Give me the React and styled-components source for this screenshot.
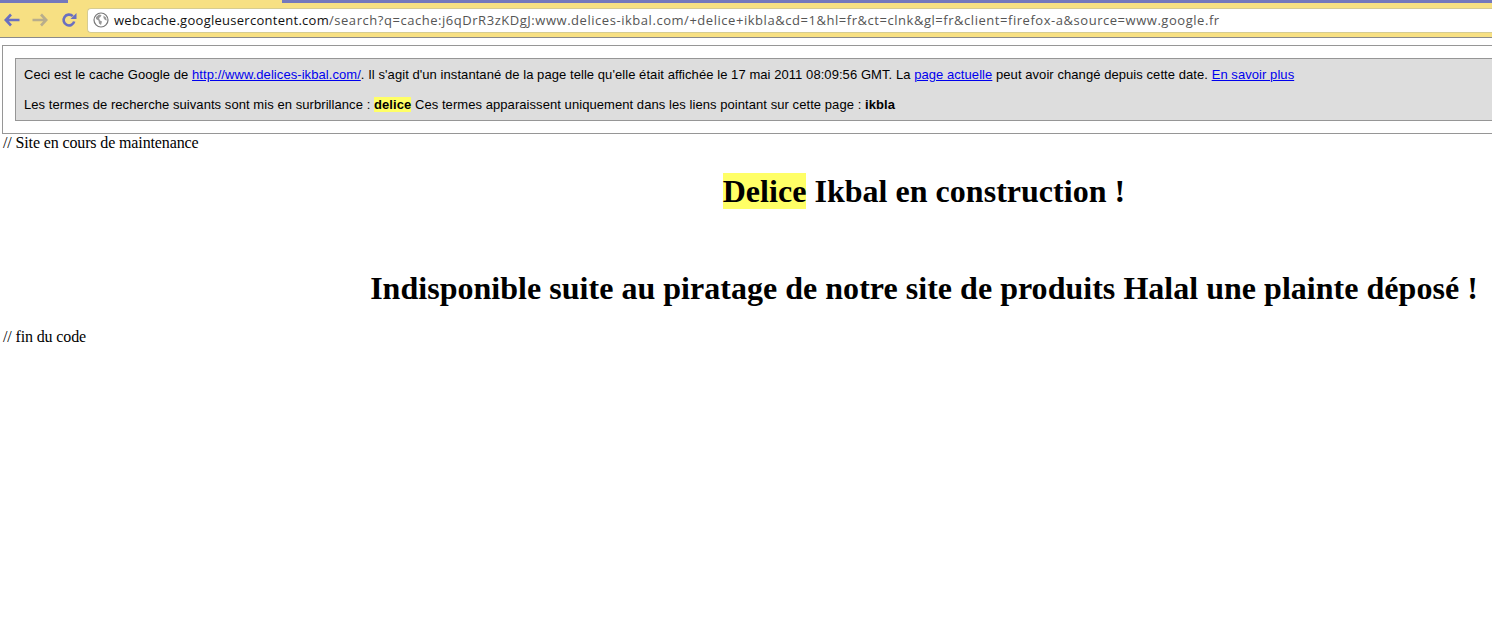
import styled, { createGlobalStyle } from "styled-components"

const Global = createGlobalStyle`
  html, body {
    margin: 0;
    padding: 0;
    background: #fff;
    overflow: hidden;
  }
`

const Page = styled.div`
  width: 1492px;
  height: 622px;
  overflow: hidden;
  font-family: "Liberation Serif", "Times New Roman", serif;
  font-size: 16px;
  color: #000;
`

const TabStrip = styled.div`
  height: 3px;
  display: flex;
  background: #f7e083;
`

const TabEdge = styled.div`
  width: ${(p) => p.$w}px;
  flex: ${(p) => (p.$w ? "none" : 1)};
  background: ${(p) => (p.$gap ? "#f7e083" : "#7478bd")};
`

const Toolbar = styled.div`
  height: 34px;
  display: flex;
  align-items: center;
  background: #f7e083;
  border-bottom: 1px solid #8a8a8a;
`

const NavIcon = styled.svg`
  width: 16px;
  height: 16px;
  margin-left: ${(p) => p.$ml}px;
  margin-bottom: 1px;
  flex: none;
`

const Omnibox = styled.div`
  height: 22px;
  padding-bottom: 1px;
  margin-left: 10px;
  flex: 1;
  display: flex;
  align-items: center;
  background: #fff;
  border: 1px solid #d6cc92;
  border-right: none;
  border-radius: 4px 0 0 4px;
  font-family: "Open Sans", "DejaVu Sans", sans-serif;
  font-size: 13px;
  letter-spacing: 0.54px;
  color: #555;
  white-space: nowrap;
`

const Globe = styled.svg`
  width: 16px;
  height: 16px;
  margin: 0 5px 0 5px;
  flex: none;
`

const Host = styled.span`
  color: #111;
  letter-spacing: 0.27px;
`

const CacheBar = styled.div`
  margin: 7px -20px 0 2px;
  padding: 12px;
  background: #fff;
  border: 1px solid #969696;
  font-family: "Liberation Sans", Arial, sans-serif;
  font-size: 13px;
  letter-spacing: 0.065px;
`

const CacheInner = styled.div`
  background: #ddd;
  border: 1px solid #969696;
  padding: 0 8px;
  height: 61px;
  color: #000;
`

const CacheLine = styled.div`
  height: 15px;
  line-height: 15px;
  margin-top: ${(p) => p.$mt}px;
  white-space: nowrap;
`

const CacheLink = styled.a`
  color: #0000ee;
  text-decoration: underline;
`

const Mark = styled.b`
  background: #ffff66;
  font-weight: bold;
`

const Note = styled.div`
  height: 18px;
  line-height: 18px;
  margin-top: ${(p) => p.$mt || 0}px;
  padding-left: 3px;
  letter-spacing: -0.13px;
`

const Heading = styled.h1`
  margin: ${(p) => p.$mt}px 0 0;
  padding-left: 356px;
  text-align: center;
  font-size: 32px;
  line-height: 37px;
  font-weight: bold;
  letter-spacing: 0.025px;
  white-space: nowrap;
`

const HeadingMark = styled.span`
  background: #ffff66;
`

const App = () => {
  return (
    <Page>
      <Global />
      <TabStrip>
        <TabEdge $w={68} />
        <TabEdge $w={214} $gap />
        <TabEdge />
      </TabStrip>
      <Toolbar>
        <NavIcon $ml={4} viewBox="0 0 16 16">
          <path d="M7 2.500 1.800 8 7 13.500M2.500 8H15.500" fill="none" stroke="#6a6fc0" strokeWidth="2.600" />
        </NavIcon>
        <NavIcon $ml={12} viewBox="0 0 16 16">
          <path d="M9 2.500 14.200 8 9 13.500M13.500 8H0.500" fill="none" stroke="#b8ad8c" strokeWidth="2.600" />
        </NavIcon>
        <NavIcon $ml={13} viewBox="0 0 16 16">
          <path d="M13.200 9.500A5.400 5.400 0 1 1 11.800 4.200" fill="none" stroke="#6a6fc0" strokeWidth="2.600" />
          <path d="M9.500 7h6V1z" fill="#6a6fc0" />
        </NavIcon>
        <Omnibox>
          <Globe viewBox="0 0 16 16">
            <circle cx="8" cy="8" r="7" fill="#fff" stroke="#777" strokeWidth="1.200" />
            <path d="M3 5l3-2.500 2.500.5-1 2-1.500 1 1 2.500 2 1-1 3.500-2-1.500-.5-3L3 7z" fill="#999" />
            <path d="M10.500 3.500l2.500 2 .8 3-1.800-.5-1.500-2z" fill="#999" />
          </Globe>
          <Host>webcache.googleusercontent.com</Host>
          /search?q=cache:j6qDrR3zKDgJ:www.delices-ikbal.com/+delice+ikbla&amp;cd=1&amp;hl=fr&amp;ct=clnk&amp;gl=fr&amp;client=firefox-a&amp;source=www.google.fr
        </Omnibox>
      </Toolbar>
      <CacheBar>
        <CacheInner>
          <CacheLine $mt={8}>
            Ceci est le cache Google de <CacheLink>http://www.delices-ikbal.com/</CacheLink>. Il s'agit d'un instantané de la page telle qu'elle était affichée le 17 mai 2011 08:09:56 GMT. La <CacheLink>page actuelle</CacheLink> peut avoir changé depuis cette date. <CacheLink>En savoir plus</CacheLink>
          </CacheLine>
          <CacheLine $mt={15}>
            Les termes de recherche suivants sont mis en surbrillance : <Mark>delice</Mark> Ces termes apparaissent uniquement dans les liens pointant sur cette page : <b>ikbla</b>
          </CacheLine>
        </CacheInner>
      </CacheBar>
      <Note>// Site en cours de maintenance</Note>
      <Heading $mt={21}><HeadingMark>Delice</HeadingMark> Ikbal en construction !</Heading>
      <Heading $mt={60}>Indisponible suite au piratage de notre site de produits Halal une plainte déposé !</Heading>
      <Note $mt={21}>// fin du code</Note>
    </Page>
  )
}

export default App
